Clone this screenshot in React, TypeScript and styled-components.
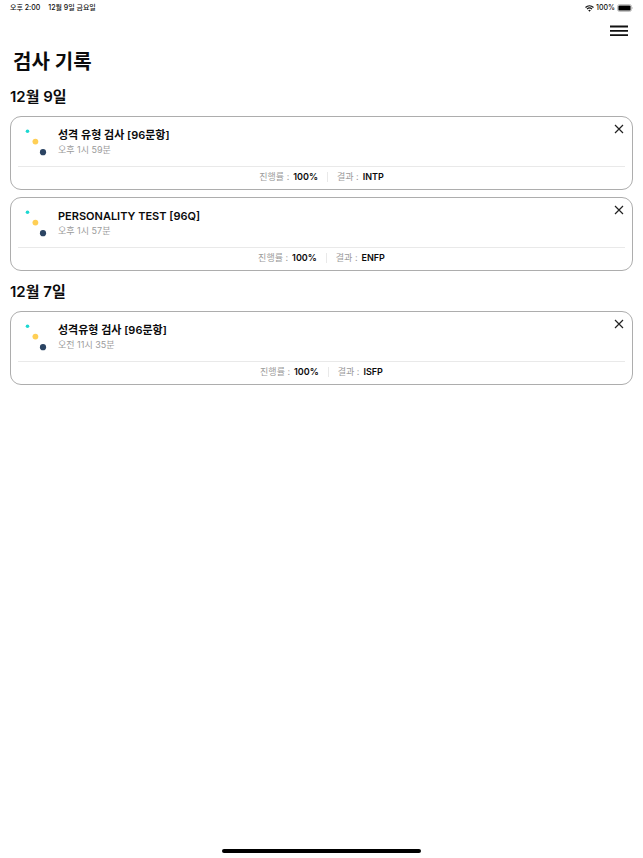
import React from "react";
import styled, { createGlobalStyle } from "styled-components";

const GlobalStyle = createGlobalStyle`
  *, *::before, *::after { box-sizing: border-box; }
  body {
    margin: 0;
    background: #fff;
    color: #0b0b0c;
    font-family: Inter, "Noto Sans CJK KR", sans-serif;
  }
  h1, h2, h3, p, dl, dt, dd { margin: 0; }
  button { border: 0; padding: 0; background: none; color: inherit; cursor: pointer; }
`;

const Screen = styled.div`
  display: flex;
  flex-direction: column;
  min-height: 100vh;
`;

const StatusBar = styled.div`
  display: flex;
  justify-content: space-between;
  align-items: center;
  height: 16px;
  padding: 0 10px;
  font-size: 7px;
  line-height: 16px;
  font-weight: 500;
`;

const StatusGroup = styled.div<{ $gap: number }>`
  display: flex;
  align-items: center;
  gap: ${(p) => p.$gap}px;
`;

const Header = styled.header`
  display: flex;
  justify-content: flex-end;
  padding: 5px 15px 0;
`;

const MenuButton = styled.button`
  display: grid;
  place-items: center;
  width: 18px;
  height: 20px;
`;

const Main = styled.main`
  flex: 1;
  padding: 7px 10px 0;
`;

const PageTitle = styled.h1`
  padding-left: 3px;
  font-size: 20px;
  line-height: 28px;
  font-weight: 600;
`;

const DayTitle = styled.h2`
  padding-top: 2px;
  font-size: 15px;
  line-height: 38px;
  font-weight: 600;
`;

const CardList = styled.div`
  display: flex;
  flex-direction: column;
  gap: 7px;
`;

const Card = styled.article`
  height: 74px;
  padding: 0 7px;
  border: 1px solid #adadad;
  border-radius: 11px;
`;

const CardTop = styled.div`
  display: flex;
  height: 50px;
  border-bottom: 1px solid #e9e9e9;
`;

const DotsIcon = styled.svg`
  flex: none;
  width: 40px;
  height: 48px;
`;

const CardText = styled.div`
  flex: 1;
  padding-top: 10px;
`;

const TestName = styled.h3`
  font-size: 11px;
  line-height: 16px;
  font-weight: 600;
`;

const TestTime = styled.p`
  color: #9b9b9b;
  font-size: 9px;
  line-height: 14px;
`;

const CloseButton = styled.button`
  display: grid;
  place-items: center;
  width: 12px;
  height: 24px;
`;

const Stats = styled.dl`
  display: flex;
  justify-content: center;
  align-items: center;
  height: 20px;
  font-size: 9px;
  line-height: 10px;
`;

const Stat = styled.div`
  display: flex;
  gap: 4px;

  & + & {
    margin-left: 9px;
    padding-left: 9px;
    border-left: 1px solid #e9e9e9;
  }
`;

const StatLabel = styled.dt`
  color: #9b9b9b;
`;

const StatValue = styled.dd`
  font-weight: 600;
`;

const HomeBar = styled.footer`
  display: flex;
  justify-content: center;
  padding-bottom: 5px;

  &::after {
    content: "";
    width: 31%;
    height: 4px;
    border-radius: 2px;
    background: #000;
  }
`;

type Test = { name: string; time: string; progress: string; result: string };

const days: { date: string; tests: Test[] }[] = [
  {
    date: "12월 9일",
    tests: [
      { name: "성격 유형 검사 [96문항]", time: "오후 1시 59분", progress: "100%", result: "INTP" },
      { name: "PERSONALITY TEST [96Q]", time: "오후 1시 57분", progress: "100%", result: "ENFP" },
    ],
  },
  {
    date: "12월 7일",
    tests: [
      { name: "성격유형 검사 [96문항]", time: "오전 11시 35분", progress: "100%", result: "ISFP" },
    ],
  },
];

function TestCard({ test }: { test: Test }) {
  return (
    <Card>
      <CardTop>
        <DotsIcon viewBox="0 0 40 48" aria-hidden="true">
          <circle cx="9.5" cy="14.2" r="1.8" fill="#1cd8d2" />
          <circle cx="17.4" cy="24.6" r="2.9" fill="#ffcf55" />
          <circle cx="25" cy="35.2" r="3.1" fill="#2b4463" />
        </DotsIcon>
        <CardText>
          <TestName>{test.name}</TestName>
          <TestTime>{test.time}</TestTime>
        </CardText>
        <CloseButton type="button" aria-label="삭제">
          <svg width="10" height="10" viewBox="0 0 10 10" fill="none" stroke="#222" strokeWidth="1.2">
            <path d="M1 1l8 8M9 1L1 9" />
          </svg>
        </CloseButton>
      </CardTop>
      <Stats>
        <Stat>
          <StatLabel>진행률 :</StatLabel>
          <StatValue>{test.progress}</StatValue>
        </Stat>
        <Stat>
          <StatLabel>결과 :</StatLabel>
          <StatValue>{test.result}</StatValue>
        </Stat>
      </Stats>
    </Card>
  );
}

export default function App() {
  return (
    <Screen>
      <GlobalStyle />
      <StatusBar>
        <StatusGroup $gap={8}>
          <span>오후 2:00</span>
          <span>12월 9일 금요일</span>
        </StatusGroup>
        <StatusGroup $gap={2}>
          <svg width="9" height="7" viewBox="0 0 9 7" fill="none" stroke="#111" strokeWidth="1.2" aria-hidden="true">
            <path d="M.5 2.5C2.8.3 6.2.3 8.5 2.5M2 4.2C3.4 2.8 5.6 2.8 7 4.2" />
            <path d="M4.5 6.7L3.2 5.3Q4.5 4.2 5.8 5.3Z" fill="#111" stroke="none" />
          </svg>
          <span>100%</span>
          <svg width="16" height="8" viewBox="0 0 16 8" aria-hidden="true">
            <rect x=".5" y=".5" width="14" height="7" rx="2" fill="#fff" stroke="#aaa" strokeWidth=".7" />
            <rect x="1.4" y="1.4" width="12.2" height="5.2" rx="1.2" fill="#000" />
            <path d="M15.3 2.9q.7.4.7 1.1t-.7 1.1z" fill="#aaa" />
          </svg>
        </StatusGroup>
      </StatusBar>
      <Header>
        <MenuButton type="button" aria-label="메뉴">
          <svg width="18" height="12" viewBox="0 0 18 12" stroke="#111" strokeWidth="1.8">
            <path d="M0 1.5h18M0 5.8h18M0 10.2h18" />
          </svg>
        </MenuButton>
      </Header>
      <Main>
        <PageTitle>검사 기록</PageTitle>
        {days.map((day) => (
          <section key={day.date}>
            <DayTitle>{day.date}</DayTitle>
            <CardList>
              {day.tests.map((test) => (
                <TestCard key={test.time} test={test} />
              ))}
            </CardList>
          </section>
        ))}
      </Main>
      <HomeBar />
    </Screen>
  );
}
